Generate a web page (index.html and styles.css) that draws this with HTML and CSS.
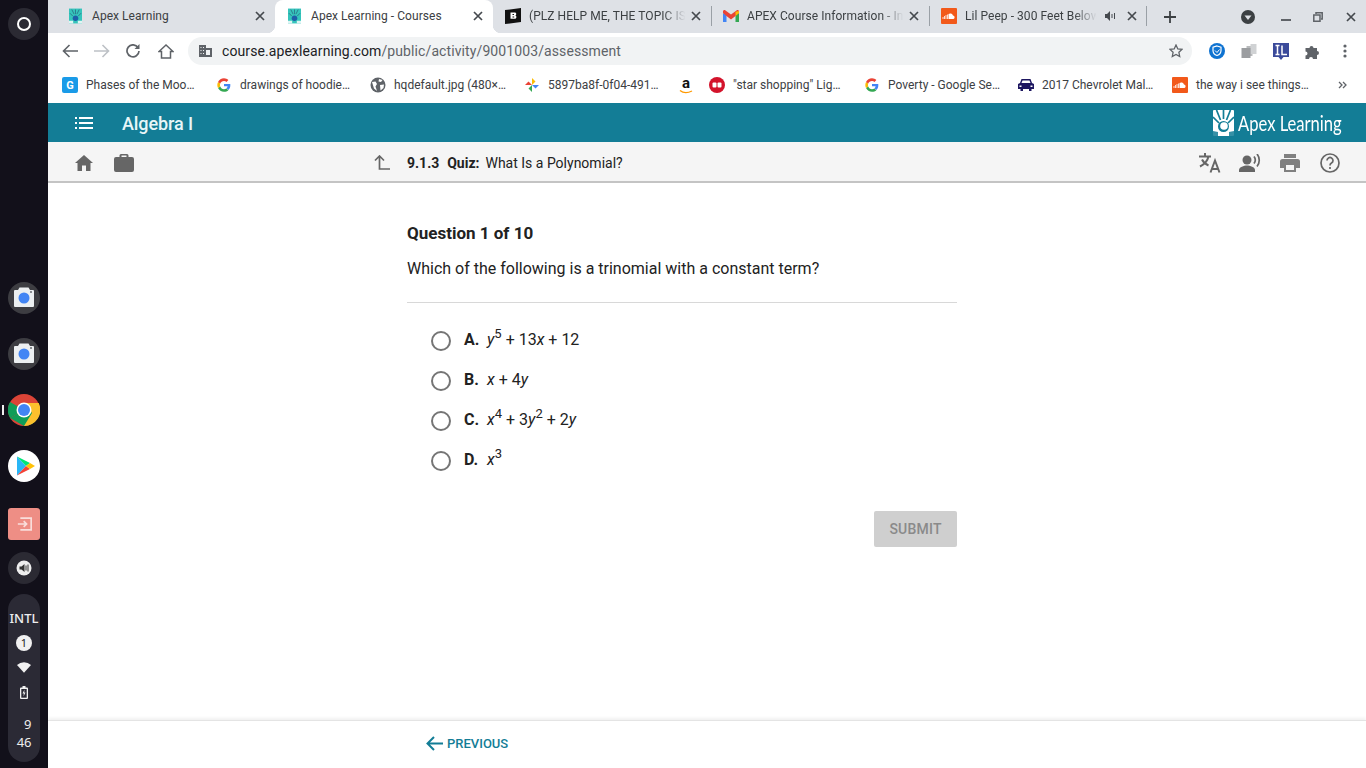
FILE: index.html
```html
<!DOCTYPE html>
<html>
<head>
    <meta charset="UTF-8">
    <title>Apex Learning - Courses</title>
    <link rel="stylesheet" href="styles.css">
</head>
<body>
    <!-- shared icons -->
    <svg class="defs" width="0" height="0">
        <symbol id="ic-apex" viewBox="0 0 14 16">
            <rect width="14" height="16" fill="#35c4bb"/>
            <path d="M3 1l2.500 5M7 1v5M11 1L8.500 6M1 5l3 3M13 5l-3 3" stroke="#2b6f86" stroke-width=".9"/>
            <circle cx="7" cy="10.500" r="3" fill="#1d5fa8"/>
            <path d="M0 13h4.500v3H0zM9.500 13H14v3H9.500z" fill="#dff5f3"/>
        </symbol>
        <symbol id="ic-close" viewBox="0 0 10 10">
            <path d="M1 1l8 8M9 1L1 9" stroke="#45494e" stroke-width="1.700" fill="none"/>
        </symbol>
        <symbol id="ic-google" viewBox="-1.500 -1.500 19 19">
            <path d="M15.500 8.200c0-.6 0-1-.1-1.500H8v2.900h4.300c-.2 1-.7 1.800-1.600 2.400l2.500 1.900c1.500-1.300 2.300-3.300 2.300-5.700z" fill="#4285f4"/>
            <path d="M8 16c2.100 0 3.900-.7 5.200-1.900l-2.500-1.900c-.7.5-1.600.8-2.700.8-2.100 0-3.800-1.400-4.500-3.300L.9 11.600C2.200 14.200 4.900 16 8 16z" fill="#34a853"/>
            <path d="M3.500 9.700c-.4-1.100-.4-2.300 0-3.400L.9 4.400c-1.100 2.200-1.100 5 0 7.200z" fill="#fbbc05"/>
            <path d="M8 3.200c1.200 0 2.200.4 3 1.200l2.200-2.200C11.900.9 10.100 0 8 0 4.900 0 2.200 1.800.9 4.400l2.600 1.900C4.200 4.500 5.900 3.200 8 3.200z" fill="#ea4335"/>
        </symbol>
        <symbol id="ic-cloud" viewBox="0 0 16 16">
            <rect width="16" height="16" rx="1" fill="#f2591a"/>
            <path d="M2 9v2M3.500 8v3M5 7v4M6.500 6.500V11" stroke="#fff" stroke-width=".8"/>
            <path d="M7.500 11V6a3 3 0 0 1 4.500 1.400A1.900 1.900 0 0 1 12.500 11z" fill="#fff"/>
        </symbol>
        <symbol id="ic-camera" viewBox="0 0 32 32">
            <circle cx="16" cy="16" r="16" fill="#3d3d42"/>
            <path d="M7 8h3l1.500-2.500h9L22 8h3a1 1 0 0 1 1 1v15a1 1 0 0 1-1 1H7a1 1 0 0 1-1-1V9a1 1 0 0 1 1-1z" fill="#eceff1"/>
            <circle cx="16" cy="16" r="5.500" fill="#4285f4"/>
            <rect x="22" y="9" width="2" height="2" fill="#8a8d91"/>
        </symbol>
    </svg>

    <aside class="shelf">
        <div class="launcher"><span class="ring"></span></div>
        <svg class="app first" width="32" height="32"><use href="#ic-camera"/></svg>
        <svg class="app" width="32" height="32"><use href="#ic-camera"/></svg>
        <div class="app running">
            <svg width="32" height="32" viewBox="0 0 32 32">
                <circle cx="16" cy="16" r="16" fill="#db4437"/>
                <path d="M16 16L2.100 24A16 16 0 0 1 2.100 8z" fill="#0f9d58"/>
                <path d="M16 16h16a16 16 0 0 1-8 13.900L16 32 2.100 24z" fill="#0f9d58"/>
                <path d="M16 9h14.700A16 16 0 0 1 16 32l8-13z" fill="#fbc02d"/>
                <circle cx="16" cy="16" r="7.500" fill="#fff"/>
                <circle cx="16" cy="16" r="6" fill="#4285f4"/>
            </svg>
        </div>
        <svg class="app" width="32" height="32" viewBox="0 0 32 32">
            <circle cx="16" cy="16" r="16" fill="#fff"/>
            <path d="M9 6.500v19L18 16z" fill="#29b6f6"/>
            <path d="M9 6.500l13 6.500-4 3z" fill="#00e676"/>
            <path d="M9 25.500l13-6.500-4-3z" fill="#f44336"/>
            <path d="M22 13l5 3-5 3-4-3z" fill="#ffc107"/>
        </svg>
        <div class="app exit">
            <svg width="15" height="14" viewBox="0 0 18 16" fill="none" stroke="#f9dedb" stroke-width="2">
                <path d="M5 2V1h12v14H5v-1"/>
                <path d="M1 8h10M8 4.500L11.500 8 8 11.500"/>
            </svg>
        </div>
        <div class="audio">
            <svg width="16" height="16" viewBox="0 0 16 16">
                <circle cx="8" cy="8" r="7.500" fill="#eee"/>
                <path d="M3.500 6.500h2L8.500 4v8l-3-2.500h-2z" fill="#333"/>
                <path d="M10 5.500v5M12 4.500v7" stroke="#333" stroke-width="1"/>
            </svg>
        </div>
        <div class="tray">
            <div class="tray-lang">INTL</div>
            <div class="tray-badge">1</div>
            <svg width="14" height="11" viewBox="0 0 16 12"><path d="M0 3a12 12 0 0 1 16 0L8 12z" fill="#f1f1f1"/></svg>
            <svg class="tray-batt" width="8" height="13" viewBox="0 0 8 13">
                <path d="M2.500 0h3v1.500H7a1 1 0 0 1 1 1V12a1 1 0 0 1-1 1H1a1 1 0 0 1-1-1V2.500a1 1 0 0 1 1-1h1.500z" fill="#f1f1f1"/>
                <path d="M1.300 3h5.400v8.700H1.300z" fill="#2b2a35"/>
                <path d="M4.500 3.500L2.500 7.500h1.300l-.3 3L5.500 6.500H4.200z" fill="#f1f1f1"/>
            </svg>
            <div class="tray-time"><span>9</span><span>46</span></div>
        </div>
    </aside>

    <div class="window">
        <div class="tabstrip">
            <div class="tab">
                <svg class="fav" width="13" height="16"><use href="#ic-apex"/></svg>
                <span class="tab-title">Apex Learning</span>
                <svg class="tab-x" width="10" height="10"><use href="#ic-close"/></svg>
            </div>
            <div class="tab active">
                <svg class="fav" width="13" height="16"><use href="#ic-apex"/></svg>
                <span class="tab-title">Apex Learning - Courses</span>
                <svg class="tab-x" width="10" height="10"><use href="#ic-close"/></svg>
            </div>
            <div class="tab">
                <svg class="fav wide" width="16" height="16" viewBox="0 0 16 16">
                    <path d="M0 2l16-2v14L0 16z" fill="#111"/>
                    <path d="M5.500 4.500h4.300c1.700 0 2 2.600.5 3 1.700.3 1.500 3.300-.5 3.300H5.500zM7.500 6v1h1.500V6zM7.500 8.500v1h1.700v-1z" fill="#fff"/>
                </svg>
                <span class="tab-title fade">(PLZ HELP ME, THE TOPIC IS</span>
                <svg class="tab-x" width="10" height="10"><use href="#ic-close"/></svg>
            </div>
            <div class="tab sep">
                <svg class="fav wide" width="16" height="12" viewBox="0 0 16 12">
                    <path d="M0 3v9h3.500V5z" fill="#4285f4"/>
                    <path d="M16 3v9h-3.500V5z" fill="#34a853"/>
                    <path d="M0 1.500C0 .2 1.500-.4 2.500.4L8 4.500 13.500.4c1-.8 2.500-.2 2.500 1.100V3l-3.500 3L8 9.500 3.500 6 0 3z" fill="#ea4335"/>
                    <path d="M12.500 1.800L16 1v2l-3.500 3z" fill="#fbbc05"/>
                </svg>
                <span class="tab-title fade">APEX Course Information - In</span>
                <svg class="tab-x" width="10" height="10"><use href="#ic-close"/></svg>
            </div>
            <div class="tab sep last">
                <svg class="fav wide" width="16" height="16"><use href="#ic-cloud"/></svg>
                <span class="tab-title fade">Lil Peep - 300 Feet Below</span>
                <svg class="tab-sound" width="11" height="10" viewBox="0 0 11 10">
                    <path d="M0 3h2l3-3v10L2 7H0z" fill="#45494e"/>
                    <path d="M7 3v4M9.500 2v6" stroke="#45494e" stroke-width="1"/>
                </svg>
                <svg class="tab-x" width="10" height="10"><use href="#ic-close"/></svg>
            </div>
            <svg class="newtab" width="12" height="12" viewBox="0 0 12 12">
                <path d="M6 0v12M0 6h12" stroke="#3c4043" stroke-width="1.800"/>
            </svg>
            <div class="winbtns">
                <svg width="16" height="16" viewBox="0 0 16 16">
                    <circle cx="8" cy="8" r="7" fill="#3c4043"/>
                    <path d="M4.500 6.500h7L8 11z" fill="#dee1e6"/>
                </svg>
                <svg class="wb-min" width="10" height="2"><rect width="10" height="2" fill="#5f6368"/></svg>
                <svg class="wb-max" width="10" height="10" viewBox="0 0 10 10" fill="none" stroke="#5f6368" stroke-width="1.500">
                    <path d="M3 2V.800h6.200V7H8"/>
                    <path d="M.800 3h6.200v6.200H.800z"/>
                </svg>
                <svg class="wb-x" width="10" height="10"><use href="#ic-close"/></svg>
            </div>
        </div>

        <div class="toolbar">
            <svg width="16" height="14" viewBox="0 0 16 14" fill="none" stroke="#5f6368" stroke-width="1.600">
                <path d="M16 7H1.500M7.500 1L1.500 7l6 6"/>
            </svg>
            <svg width="16" height="14" viewBox="0 0 16 14" fill="none" stroke="#bdc1c6" stroke-width="1.600">
                <path d="M0 7h14.500M8.500 1l6 6-6 6"/>
            </svg>
            <svg width="14" height="14" viewBox="0 0 14 14" fill="none" stroke="#5f6368" stroke-width="1.700">
                <path d="M12 3.500A6 6 0 1 0 13 7"/>
                <path d="M13.500 0v5h-5z" fill="#5f6368" stroke="none"/>
            </svg>
            <svg class="home" width="16" height="15" viewBox="0 0 16 15" fill="none" stroke="#5f6368" stroke-width="1.500">
                <path d="M8 1L1 7.500h2.500V14h9V7.500H15z"/>
            </svg>
            <div class="omnibox">
                <svg width="13" height="12" viewBox="0 0 13 12">
                    <path d="M0 0h7v3h6v9H0z" fill="#5f6368"/>
                    <path d="M1.500 2h1v1h-1zM4 2h1v1H4zM1.500 5h1v1h-1zM4 5h1v1H4zM1.500 8h1v1h-1zM4 8h1v1H4zM7 5h4v5H7z" fill="#f1f3f4"/>
                </svg>
                <span class="url">course.apexlearning.com<span class="url-path">/public/activity/9001003/assessment</span></span>
                <svg class="star" width="14" height="14" viewBox="0 0 14 14" fill="none" stroke="#5f6368" stroke-width="1.300">
                    <path d="M7 1l1.800 3.900 4.200.5-3.100 2.900.8 4.200L7 10.400l-3.700 2.100.8-4.200L1 5.400l4.200-.5z"/>
                </svg>
            </div>
            <div class="extensions">
                <svg width="16" height="16" viewBox="0 0 16 16">
                    <circle cx="8" cy="8" r="8" fill="#0f73d1"/>
                    <path d="M8 3l4 1.300v3.200c0 2.500-1.700 4.200-4 5-2.300-.8-4-2.500-4-5V4.300z" fill="none" stroke="#fff" stroke-width="1.200"/>
                    <path d="M6 7.500L8 9.500 10.500 6.500" fill="none" stroke="#fff" stroke-width="1"/>
                </svg>
                <svg width="16" height="14" viewBox="0 0 15 14">
                    <path d="M5 2h6v10H5z" fill="#b8babc"/>
                    <path d="M9 0h6v10H9z" fill="#d0d2d4"/>
                    <path d="M0 4h9v10H0z" fill="#9b9da0"/>
                </svg>
                <svg width="16" height="17" viewBox="0 0 16 17">
                    <path d="M0 0h16v14h-5.500L8 17l-2.500-3H0z" fill="#3b4a9a"/>
                    <path d="M2.500 2.500h4M2.500 11.500h4M4.500 2.500v9M9 2.500v9h5" stroke="#fff" stroke-width="1.500" fill="none"/>
                </svg>
                <svg width="16" height="15" viewBox="0 0 15 15">
                    <path d="M0 4h4a2 2 0 0 1 4 0h3.500v3a2 2 0 0 1 0 4V15H7.500a2 2 0 0 0-4 0H0v-3.500a2 2 0 0 0 0-4z" fill="#5f6368"/>
                </svg>
                <svg width="16" height="14" viewBox="0 0 16 14" fill="#5f6368">
                    <circle cx="8" cy="2" r="1.600"/><circle cx="8" cy="7" r="1.600"/><circle cx="8" cy="12" r="1.600"/>
                </svg>
            </div>
        </div>

        <div class="bookmarks">
            <div class="bm">
                <svg width="16" height="16" viewBox="0 0 16 16">
                    <rect width="16" height="16" rx="2" fill="#1a9be8"/>
                    <text x="8" y="12" text-anchor="middle" class="bm-g">G</text>
                </svg>
                <span>Phases of the Moo…</span>
            </div>
            <div class="bm"><svg width="16" height="16"><use href="#ic-google"/></svg><span>drawings of hoodie…</span></div>
            <div class="bm">
                <svg width="16" height="16" viewBox="0 0 16 16">
                    <circle cx="8" cy="8" r="7.500" fill="#5f6368"/>
                    <path d="M2 5l3.500-.5L7 7 5.500 9.500 7 14 4 11.500zM9 2l3.500 1L11 5 8.500 4.500zM10 8l4-.5-.5 3.500-3 2.500z" fill="#fff"/>
                </svg>
                <span>hqdefault.jpg (480×…</span>
            </div>
            <div class="bm">
                <svg width="16" height="14" viewBox="-1 0 16 14">
                    <path d="M7 7V0l3.500 3.500z" fill="#fbbc05"/>
                    <path d="M7 7h7l-3.500 3.500z" fill="#4285f4"/>
                    <path d="M7 7v7l-3.500-3.500z" fill="#34a853"/>
                    <path d="M7 7H0l3.500-3.500z" fill="#ea4335"/>
                </svg>
                <span>5897ba8f-0f04-491…</span>
            </div>
            <div class="bm bm-icon">
                <div class="amazon">
                    <span>a</span>
                    <svg width="14" height="4" viewBox="0 0 14 4">
                        <path d="M1 .5c3 2.500 8 2.500 12 .5" fill="none" stroke="#f90" stroke-width="1.300"/>
                    </svg>
                </div>
            </div>
            <div class="bm bm-red">
                <svg width="16" height="16" viewBox="0 0 16 16">
                    <circle cx="8" cy="8" r="8" fill="#d3132b"/>
                    <rect x="3.500" y="5.500" width="4" height="5" rx="1" fill="#fff"/>
                    <rect x="8.500" y="5.500" width="4" height="5" rx="1" fill="#fff"/>
                </svg>
                <span>"star shopping" Lig…</span>
            </div>
            <div class="bm"><svg width="16" height="16"><use href="#ic-google"/></svg><span>Poverty - Google Se…</span></div>
            <div class="bm">
                <svg width="16" height="12" viewBox="0 0 16 12">
                    <path d="M3.500 0h9L14 4l2 1v5h-2.500v2H11v-2H5v2H2.500v-2H0V5l2-1z" fill="#1d1660"/>
                    <path d="M4.500 1.500h7l1 2.500h-9z" fill="#fff"/>
                    <path d="M1.500 6.500h2v1.500h-2zM12.500 6.500h2v1.500h-2z" fill="#fff"/>
                </svg>
                <span>2017 Chevrolet Mal…</span>
            </div>
            <div class="bm"><svg width="16" height="16"><use href="#ic-cloud"/></svg><span>the way i see things…</span></div>
            <svg class="bm-more" width="9" height="8" viewBox="0 0 9 8" fill="none" stroke="#5f6368" stroke-width="1.300">
                <path d="M1 1l3 3-3 3M5 1l3 3-3 3"/>
            </svg>
        </div>

        <div class="app-page">
            <header class="topbar">
                <svg class="menu-ic" width="18" height="12" viewBox="0 0 18 12" fill="#fff">
                    <path d="M0 0h2v2H0zM4 0h14v2H4zM0 5h2v2H0zM4 5h14v2H4zM0 10h2v2H0zM4 10h14v2H4z"/>
                </svg>
                <span class="course-name">Algebra I</span>
                <div class="logo">
                    <svg width="21" height="26" viewBox="0 0 21 26">
                        <rect width="21" height="26" rx="1" fill="#fff"/>
                        <path d="M3.500 0l4 10M10.500 0v9M17.500 0l-4 10M0 7l6 6M21 7l-6 6" stroke="#137d96" stroke-width="1.700"/>
                        <circle cx="10.500" cy="16.500" r="5.500" fill="#137d96"/>
                        <circle cx="11" cy="16" r="3.800" fill="#fff"/>
                        <path d="M0 21l5 1v4H0zM21 21l-5 1v4h5z" fill="#137d96" opacity=".85"/>
                    </svg>
                    <span>Apex Learning</span>
                </div>
            </header>

            <nav class="subbar">
                <svg class="sub-first" width="18" height="16" viewBox="0 0 18 16" fill="#666">
                    <path d="M9 0L0 8h2.500v8h4.500v-5.500h4V16h4.500V8H18z"/>
                </svg>
                <svg class="sub-brief" width="20" height="18" viewBox="0 0 20 18" fill="#666">
                    <path d="M7 0h6a1.500 1.500 0 0 1 1.500 1.500V3H18a2 2 0 0 1 2 2v11a2 2 0 0 1-2 2H2a2 2 0 0 1-2-2V5a2 2 0 0 1 2-2h3.500V1.500A1.500 1.500 0 0 1 7 0zm.500 1.500V3h5V1.500z" fill-rule="evenodd"/>
                </svg>
                <svg class="sub-up" width="16" height="15" viewBox="0 0 16 15" fill="none" stroke="#666" stroke-width="1.700">
                    <path d="M1 5.500L5.500 1 10 5.500M5.500 1.500V14H16"/>
                </svg>
                <div class="crumb"><b>9.1.3</b><b>Quiz:</b><span>What Is a Polynomial?</span></div>
                <div class="sub-tools">
                    <svg height="20" viewBox="0 0 22 20" fill="none" stroke="#666" stroke-width="2">
                        <path d="M0 3.500h12M6 0v3.500M9.500 3.500C8.500 8 5 11.500 1 13.500M3 6.500c1.500 3 4 5 6.500 6"/>
                        <path d="M11.500 19.500L16 7.500l4.500 12M13 16h6"/>
                    </svg>
                    <svg height="18" viewBox="0 0 22 18" fill="#666">
                        <circle cx="8" cy="6" r="4.500"/>
                        <path d="M0 18v-2c0-3 5-4.500 8-4.500s8 1.500 8 4.500v2z"/>
                        <path d="M15 2.500c1.500 2 1.500 5 0 7M18 0c3 3.500 3 9 0 12.500" fill="none" stroke="#666" stroke-width="1.700"/>
                    </svg>
                    <svg height="18" viewBox="-1 0 22 18" fill="#808080">
                        <path d="M4 0h12v4H4zM2.500 5h15A2.500 2.500 0 0 1 20 7.500V14h-4v4H4v-4H0V7.500A2.500 2.500 0 0 1 2.500 5zM6 11v5h8v-5z" fill-rule="evenodd"/>
                    </svg>
                    <svg height="20" viewBox="-1 0 22 20" fill="none" stroke="#666" stroke-width="1.700">
                        <circle cx="10" cy="10" r="9"/>
                        <path d="M7 7.500a3 3 0 1 1 4.500 2.600c-1 .6-1.500 1.200-1.500 2.400"/>
                        <path d="M10 14v2"/>
                    </svg>
                </div>
            </nav>

            <main class="quiz">
                <h1 class="q-count">Question 1 of 10</h1>
                <p class="q-text">Which of the following is a trinomial with a constant term?</p>
                <div class="answers">
                    <label class="answer"><span class="radio"></span><b>A.</b><span class="expr"><i>y</i><sup>5</sup> + 13<i>x</i> + 12</span></label>
                    <label class="answer"><span class="radio"></span><b>B.</b><span class="expr"><i>x</i> + 4<i>y</i></span></label>
                    <label class="answer"><span class="radio"></span><b>C.</b><span class="expr"><i>x</i><sup>4</sup> + 3<i>y</i><sup>2</sup> + 2<i>y</i></span></label>
                    <label class="answer"><span class="radio"></span><b>D.</b><span class="expr"><i>x</i><sup>3</sup></span></label>
                </div>
                <div class="actions"><button class="submit" disabled>SUBMIT</button></div>
            </main>

            <footer class="pager">
                <a class="prev">
                    <svg width="17" height="15" viewBox="0 0 17 15" fill="none" stroke="#137d96" stroke-width="2">
                        <path d="M17 7.500H2M8 1L1.500 7.500 8 14"/>
                    </svg>
                    PREVIOUS
                </a>
            </footer>
        </div>
    </div>
</body>
</html>
```

FILE: styles.css
```css
* {
    box-sizing: border-box;
}
html, body {
    height: 100%;
}
body {
    margin: 0;
    display: flex;
    height: 768px;
    overflow: hidden;
    font-family: Roboto, "Liberation Sans", sans-serif;
    color: #222;
    background-color: #fff;
}
svg {
    display: block;
    flex: none;
}
.defs {
    position: absolute;
}

/* shelf */
.shelf {
    width: 48px;
    flex: none;
    display: flex;
    flex-direction: column;
    align-items: center;
    padding-top: 8px;
    background-color: #12101a;
}
.launcher {
    width: 32px;
    height: 32px;
    border-radius: 50%;
    background-color: #2b2a33;
    display: flex;
    align-items: center;
    justify-content: center;
}
.ring {
    width: 14px;
    height: 14px;
    border: 2px solid #fff;
    border-radius: 50%;
}
.app {
    margin-top: 24px;
}
.app.first {
    margin-top: 242px;
}
.running {
    position: relative;
}
.running::before {
    content: "";
    position: absolute;
    left: -6px;
    top: 11px;
    width: 2px;
    height: 10px;
    background-color: #eee;
}
.exit {
    width: 32px;
    height: 32px;
    margin-top: 26px;
    border-radius: 3px;
    background-color: #ee8e85;
    display: flex;
    align-items: center;
    justify-content: center;
}
.audio {
    width: 32px;
    height: 32px;
    margin-top: 12px;
    border-radius: 50%;
    background-color: #2b2a33;
    display: flex;
    align-items: center;
    justify-content: center;
}
.tray {
    width: 32px;
    height: 168px;
    margin-top: 10px;
    border-radius: 16px;
    background-color: #2b2a35;
    display: flex;
    flex-direction: column;
    align-items: center;
    color: #eee;
    font-family: "Noto Sans", sans-serif;
}
.tray-lang {
    margin-top: 15px;
    font-size: 13px;
    line-height: 18px;
    font-weight: 500;
}
.tray-badge {
    width: 16px;
    height: 16px;
    margin: 8px 0 11px;
    border-radius: 50%;
    background-color: #f1f1f1;
    color: #222;
    font-size: 11px;
    line-height: 16px;
    text-align: center;
}
.tray-batt {
    margin-top: 13px;
}
.tray-time {
    width: 15px;
    margin-top: 16px;
    display: flex;
    flex-direction: column;
    align-items: flex-end;
    font-size: 13px;
    line-height: 18px;
}

/* browser */
.window {
    flex: 1;
    min-width: 0;
    display: flex;
    flex-direction: column;
}
.tabstrip {
    height: 33px;
    flex: none;
    display: flex;
    align-items: center;
    padding-left: 9px;
    background-color: #dee1e6;
}
.tab {
    width: 218px;
    height: 33px;
    flex: none;
    display: flex;
    align-items: center;
    padding: 0 10px 1px 12px;
    position: relative;
    font-size: 12px;
    color: #3c4043;
}
.tab.active {
    padding-left: 13px;
    background-color: #fff;
    border-radius: 8px 8px 0 0;
}
/* little flares at the foot of the open tab */
.tab.active::before,
.tab.active::after {
    content: "";
    position: absolute;
    bottom: 0;
    width: 8px;
    height: 8px;
}
.tab.active::before {
    left: -8px;
    background: radial-gradient(circle at 0 0, transparent 8px, #fff 8.5px);
}
.tab.active::after {
    right: -8px;
    background: radial-gradient(circle at 100% 0, transparent 8px, #fff 8.5px);
}
.tab.sep::before,
.tab.last::after {
    content: "";
    position: absolute;
    top: 6px;
    width: 1px;
    height: 20px;
    background-color: #9aa0a6;
}
.tab.sep::before {
    left: 0;
}
.tab.last::after {
    right: 0;
}
.fav {
    margin-right: 10px;
}
.fav.wide {
    margin: 0 8px 0 0;
}
.tab-title {
    flex: 1;
    min-width: 0;
    white-space: nowrap;
    overflow: hidden;
    letter-spacing: .05px;
}
.tab-title.fade {
    -webkit-mask-image: linear-gradient(to right, #000 85%, transparent 99%);
    mask-image: linear-gradient(to right, #000 85%, transparent 99%);
}
.tab.last .tab-title.fade {
    -webkit-mask-image: linear-gradient(to right, #000 78%, transparent 94%);
    mask-image: linear-gradient(to right, #000 78%, transparent 94%);
}
.tab-sound {
    margin: 0 11px 0 0;
}
.tab-x {
    margin-left: 4px;
}
.tab-sound + .tab-x {
    margin-left: 0;
}
.newtab {
    margin-left: 17px;
}
.winbtns {
    margin-left: auto;
    display: flex;
    align-items: center;
    padding-right: 10px;
}
.wb-min {
    margin: 6px 0 0 25px;
}
.wb-max {
    margin-left: 22px;
}
.wb-x {
    margin-left: 23px;
}
.toolbar {
    height: 36px;
    flex: none;
    display: flex;
    align-items: center;
    gap: 16px;
    padding: 0 13px 0 14px;
    background-color: #fff;
}
.home {
    margin-left: 2px;
}
.omnibox {
    flex: 1;
    height: 28px;
    margin-left: -2px;
    display: flex;
    align-items: center;
    padding: 0 9px 0 11px;
    border-radius: 14px;
    background-color: #f1f3f4;
    font-size: 14px;
}
.url {
    margin-left: 10px;
    color: #202124;
    letter-spacing: .1px;
}
.url-path {
    color: #5f6368;
}
.star {
    margin-left: auto;
}
.extensions {
    display: flex;
    align-items: center;
    gap: 16px;
    margin-left: 1px;
}
.bookmarks {
    height: 34px;
    flex: none;
    display: flex;
    align-items: center;
    padding: 0 19px 2px 14px;
    background-color: #fff;
    font-size: 12px;
    color: #3c4043;
}
.bm {
    width: 154px;
    flex: none;
    display: flex;
    align-items: center;
    gap: 8px;
    white-space: nowrap;
}
.bm-icon {
    width: 31px;
}
.bm-red {
    width: 155px;
}
.bm-g {
    fill: #fff;
    font-size: 11px;
    font-weight: 700;
}
.amazon {
    width: 16px;
    display: flex;
    flex-direction: column;
    align-items: center;
    color: #111;
    font-size: 15px;
    font-weight: 700;
    line-height: 13px;
}
.bm-more {
    margin-left: auto;
}

/* apex page */
.app-page {
    flex: 1;
    min-height: 0;
    display: flex;
    flex-direction: column;
}
.topbar {
    height: 39px;
    flex: none;
    display: flex;
    align-items: center;
    padding: 0 24px 0 27px;
    background-color: #137d96;
    color: #fff;
}
.course-name {
    margin: 2px 0 0 29px;
    font-size: 18px;
    font-weight: 500;
    letter-spacing: -.1px;
    color: #e8f6f8;
}
.logo {
    margin-left: auto;
    display: flex;
    align-items: center;
    gap: 4px;
    font-family: Lato, sans-serif;
    font-size: 21px;
    white-space: nowrap;
}
.logo span {
    display: block;
    width: 104px;
    transform: scaleX(.79);
    transform-origin: left center;
}
.subbar {
    height: 41px;
    flex: none;
    display: flex;
    align-items: center;
    padding: 2px 25px 0 27px;
    background-color: #f5f5f5;
    border-bottom: 2px solid #c4c4c4;
}
.sub-brief {
    margin-left: 21px;
}
.sub-up {
    margin-left: 240px;
}
.crumb {
    margin-left: 17px;
    display: flex;
    gap: 8px;
    font-size: 14px;
    color: #222;
}
.crumb span {
    margin-left: -2px;
}
.sub-tools {
    margin-left: auto;
    display: flex;
    align-items: center;
    gap: 18px;
}
.sub-tools svg {
    width: 22px;
}
.quiz {
    flex: 1;
    width: 550px;
    margin-left: 359px;
    padding-top: 40px;
}
.q-count {
    margin: 0;
    font-size: 17px;
    line-height: 20px;
    font-weight: 700;
}
.q-text {
    margin: 16px 0 0;
    padding-bottom: 23px;
    font-size: 16px;
    line-height: 20px;
    border-bottom: 1px solid #d8d8d8;
}
.answers {
    margin-top: 18px;
}
.answer {
    height: 40px;
    display: flex;
    align-items: center;
    padding-left: 24px;
    font-size: 16px;
}
.answer b {
    width: 23px;
    margin-left: 13px;
    margin-top: -4px;
}
.radio {
    width: 20px;
    height: 20px;
    flex: none;
    border: 2px solid #757575;
    border-radius: 50%;
}
.expr {
    margin-top: -4px;
    white-space: nowrap;
}
.expr sup {
    font-size: 13px;
    line-height: 0;
    vertical-align: 7px;
}
.actions {
    margin-top: 30px;
    display: flex;
    justify-content: flex-end;
}
.submit {
    width: 83px;
    height: 36px;
    border: none;
    border-radius: 2px;
    background-color: #cfcfcf;
    color: #8a8a8a;
    font-family: inherit;
    font-size: 14px;
    font-weight: 500;
    letter-spacing: .2px;
}
.pager {
    height: 48px;
    flex: none;
    display: flex;
    align-items: center;
    padding: 0 0 2px 378px;
    border-top: 1px solid #e4e4e4;
    box-shadow: 0 -2px 3px rgba(0,0,0,0.06);
}
.prev {
    display: flex;
    align-items: center;
    gap: 4px;
    color: #137d96;
    font-size: 13px;
    font-weight: 500;
}
```
